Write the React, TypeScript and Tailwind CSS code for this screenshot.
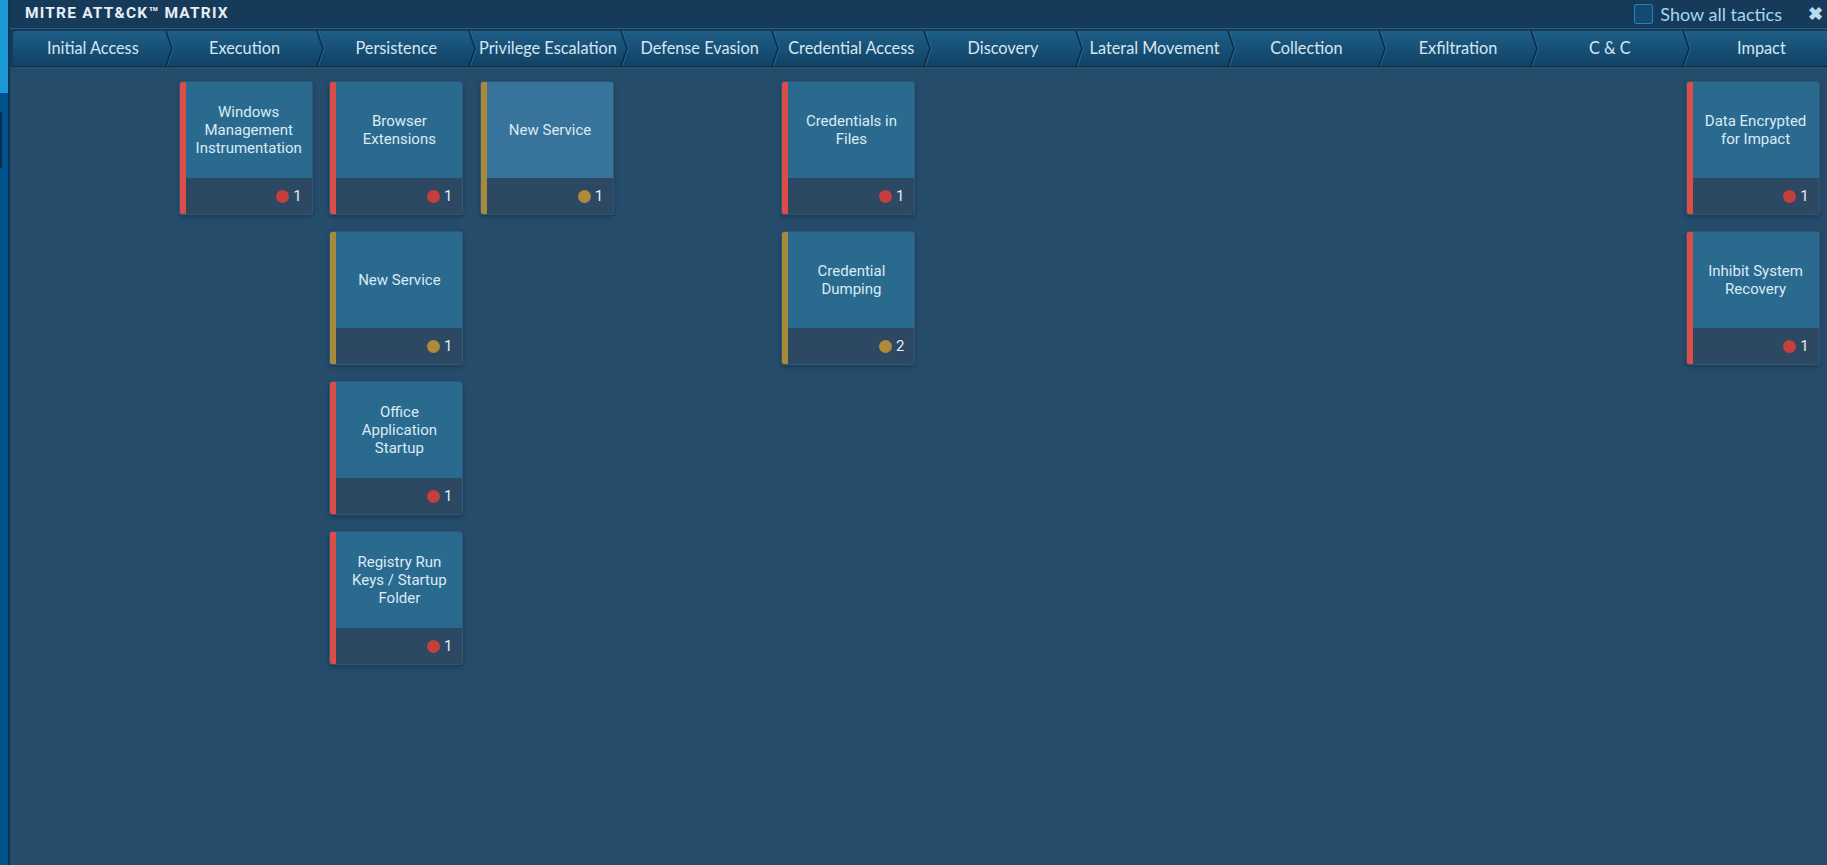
import React from "react";

type Card = { title: string; color: "red" | "gold"; count: number; hover?: boolean };

const tactics = [
  "Initial Access",
  "Execution",
  "Persistence",
  "Privilege Escalation",
  "Defense Evasion",
  "Credential Access",
  "Discovery",
  "Lateral Movement",
  "Collection",
  "Exfiltration",
  "C & C",
  "Impact",
];

const columns: Card[][] = [
  [],
  [{ title: "Windows Management Instrumentation", color: "red", count: 1 }],
  [
    { title: "Browser Extensions", color: "red", count: 1 },
    { title: "New Service", color: "gold", count: 1 },
    { title: "Office Application Startup", color: "red", count: 1 },
    { title: "Registry Run Keys / Startup Folder", color: "red", count: 1 },
  ],
  [{ title: "New Service", color: "gold", count: 1, hover: true }],
  [],
  [
    { title: "Credentials in Files", color: "red", count: 1 },
    { title: "Credential Dumping", color: "gold", count: 2 },
  ],
  [],
  [],
  [],
  [],
  [],
  [
    { title: "Data Encrypted for Impact", color: "red", count: 1 },
    { title: "Inhibit System Recovery", color: "red", count: 1 },
  ],
];

function Chevron() {
  return (
    <svg className="absolute left-0 top-0" width="10" height="35" viewBox="0 0 10 35">
      <path d="M2.4 0 Q 5.4 9 8.4 17.5 Q 5.4 26 2.4 35" fill="none" stroke="#2a6d96" strokeWidth="0.9" />
      <path d="M1 0 Q 4 9 7 17.5 Q 4 26 1 35" fill="none" stroke="#0b2f4c" strokeWidth="1.6" />
    </svg>
  );
}

function TechniqueCard({ card }: { card: Card }) {
  const bar = card.color === "red" ? "bg-[#dc4d47]" : "bg-[#a88a3c]";
  const dot = card.color === "red" ? "bg-[#c5403a]" : "bg-[#b08a3a]";
  const top = card.hover ? "bg-[#37739a]" : "bg-[#2a6a8f]";
  return (
    <div className="flex w-[134px] h-[134px] rounded-[3px] overflow-hidden border border-[#2e5878] shadow-[0_2px_4px_rgba(0,0,0,0.25)]">
      <div className={`w-[6px] shrink-0 ${bar}`} />
      <div className="flex flex-1 flex-col min-w-0">
        <div className={`h-[96px] flex items-center justify-center px-[6px] text-center text-[15px] leading-[18px] text-[#dbeaf5] ${top}`}>
          {card.title}
        </div>
        <div className="flex flex-1 items-center justify-end gap-[4px] pr-[10px] bg-[#2c4862] text-[15px] text-[#e6eef5]">
          <span className={`w-[13px] h-[13px] rounded-full ${dot}`} />
          <span>{card.count}</span>
        </div>
      </div>
    </div>
  );
}

export default function App() {
  return (
    <div className="flex w-[1827px] h-[865px] overflow-hidden bg-[#264c6c] font-['Roboto',sans-serif]">
      <div className="w-[10px] shrink-0 flex flex-col bg-[#00528c] border-r-2 border-[#0d3353]">
        <div className="h-[93px] bg-[#1b9ad7]" />
        <div className="h-[19px]" />
        <div className="h-[56px] w-[2px] bg-[#0b2e4c]" />
      </div>
      <div className="flex flex-1 flex-col min-w-0">
        <div className="h-[29px] flex items-center justify-between bg-[#163b5a] border-b border-[#2d5f83] pl-[15px] pr-[4px]">
          <div className="text-[15.5px] font-bold tracking-[1.2px] text-[#e8eef4]">MITRE ATT&amp;CK™ MATRIX</div>
          <div className="flex items-center">
            <div className="w-[19px] h-[20px] border border-[#2283b8] bg-[#134a70] rounded-[2px]" />
            <span className="ml-[7px] text-[18px] leading-none text-[#a5d6f2] font-['Lato',sans-serif]">Show all tactics</span>
            <span className="ml-[26px] text-[18px] font-bold leading-none text-[#b8dcef]">✖</span>
          </div>
        </div>
        <div className="bg-[#163b5a] pt-[2px]">
          <div className="ml-[3px] flex h-[36px] rounded-tl-[3px] border-b border-[#0e2f4a] bg-gradient-to-b from-[#1e5e86] to-[#114265]">
            {tactics.map((t, i) => (
              <div key={t} className="relative shrink-0 w-[151.7px] h-[35px] flex items-center justify-center pl-[8px]">
                {i > 0 && <Chevron />}
                <span className="text-[16.3px] text-[#d6e6f1] font-['Lato',sans-serif] whitespace-nowrap">{t}</span>
              </div>
            ))}
          </div>
        </div>
        <div className="pl-[18px] pt-[14px] grid grid-cols-[repeat(12,150.7px)]">
          {columns.map((col, i) => (
            <div key={i} className="flex flex-col gap-[16px]">
              {col.map((c, j) => (
                <TechniqueCard key={j} card={c} />
              ))}
            </div>
          ))}
        </div>
      </div>
    </div>
  );
}
